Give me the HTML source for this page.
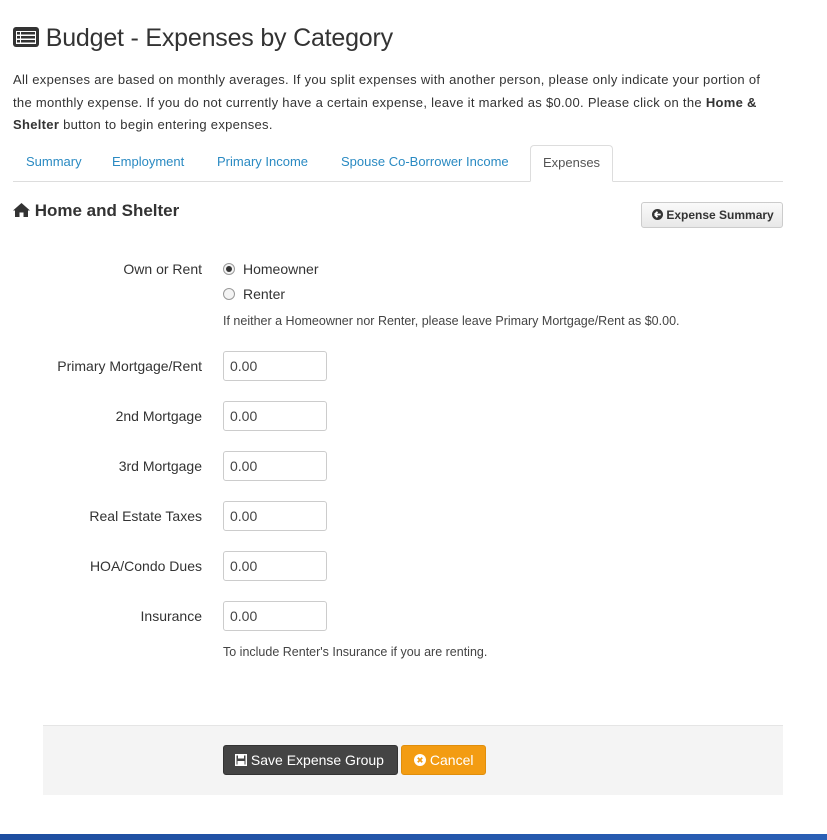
<!DOCTYPE html>
<html><head><style>
*{box-sizing:border-box}
body{margin:0;width:827px;height:840px;background:#fff;font-family:"Liberation Sans",sans-serif;color:#333;position:relative;overflow:hidden}
h1{position:absolute;left:13px;top:22px;margin:0;font-weight:normal;font-size:25px;color:#333;line-height:32px;letter-spacing:-0.2px}
.intro{position:absolute;left:13px;top:69px;width:800px;font-size:13px;line-height:22.5px;margin:0;letter-spacing:0.3px;white-space:nowrap}
.tabs{position:absolute;left:13px;top:145px;width:770px;height:37px;border-bottom:1px solid #ddd}
.tab{position:absolute;top:9px;font-size:13px;color:#2a8ac2}
.act{position:absolute;left:517px;top:0;width:83px;height:37px;border:1px solid #ddd;border-bottom:1px solid #fff;border-radius:4px 4px 0 0;background:#fff;color:#555;font-size:13px;text-align:center;padding-top:9px}
h3{position:absolute;left:13px;top:201px;margin:0;font-size:17px;font-weight:bold;color:#333}
.btn{position:absolute;border-radius:3px;font-size:12px}
.lbl{position:absolute;right:625px;font-size:14px;color:#333;text-align:right;white-space:nowrap}
.inp{position:absolute;left:223px;width:104px;height:30px;border:1px solid #ccc;border-radius:3px;font-size:14px;padding:6px 6px;color:#444}
.radio{position:absolute;left:223px;width:12px;height:12px;border:1px solid #999;border-radius:50%;background:#f4f4f4}
.t14{position:absolute;font-size:14px}
.help{position:absolute;left:223px;font-size:12.5px;color:#444}
</style></head><body>
<h1><svg width="26" height="20" viewBox="0 0 26 20" style="vertical-align:-1px"><rect x="0" y="0" width="26" height="20" rx="3" fill="#333"/><rect x="3" y="4" width="20" height="13" fill="#fff"/><g fill="#333"><rect x="4" y="5" width="3" height="2.5"/><rect x="8" y="5" width="14" height="2.5"/><rect x="4" y="9" width="3" height="2.5"/><rect x="8" y="9" width="14" height="2.5"/><rect x="4" y="13" width="3" height="2.5"/><rect x="8" y="13" width="14" height="2.5"/></g></svg> Budget - Expenses by Category</h1>
<p class="intro">All expenses are based on monthly averages. If you split expenses with another person, please only indicate your portion of<br>the monthly expense. If you do not currently have a certain expense, leave it marked as $0.00. Please click on the <b>Home &amp;</b><br><b>Shelter</b> button to begin entering expenses.</p>
<div class="tabs">
<span class="tab" style="left:13px">Summary</span>
<span class="tab" style="left:99px">Employment</span>
<span class="tab" style="left:204px">Primary Income</span>
<span class="tab" style="left:328px">Spouse Co-Borrower Income</span>
<div class="act">Expenses</div>
</div>
<h3><svg width="17" height="14" viewBox="0 0 17 14" style="vertical-align:-1px"><path d="M8.5 0 L0 7.5 L2 7.5 L2 14 L6.5 14 L6.5 9.5 L10.5 9.5 L10.5 14 L15 14 L15 7.5 L17 7.5 Z" fill="#333"/></svg> Home and Shelter</h3>
<div class="btn" style="left:641px;top:202px;width:142px;height:26px;border:1px solid #ccc;background:linear-gradient(#fafafa,#e8e8e8);color:#333;padding-top:5px;padding-left:10px;font-weight:bold"><svg width="11" height="11" viewBox="0 0 12 12" style="vertical-align:-1px"><circle cx="6" cy="6" r="6" fill="#333"/><path d="M3 6 L6 3 M3 6 L6 9 M3 6 H9.5" stroke="#fff" stroke-width="2"/></svg> Expense Summary</div>
<div class="lbl" style="top:261px">Own or Rent</div>
<div class="radio" style="top:263px"><div style="width:6px;height:6px;border-radius:50%;background:#333;margin:2px"></div></div>
<div class="t14" style="left:243px;top:261px">Homeowner</div>
<div class="radio" style="top:288px"></div>
<div class="t14" style="left:243px;top:286px">Renter</div>
<div class="help" style="top:314px">If neither a Homeowner nor Renter, please leave Primary Mortgage/Rent as $0.00.</div>
<div class="lbl" style="top:358px">Primary Mortgage/Rent</div><div class="inp" style="top:351px">0.00</div>
<div class="lbl" style="top:408px">2nd Mortgage</div><div class="inp" style="top:401px">0.00</div>
<div class="lbl" style="top:458px">3rd Mortgage</div><div class="inp" style="top:451px">0.00</div>
<div class="lbl" style="top:508px">Real Estate Taxes</div><div class="inp" style="top:501px">0.00</div>
<div class="lbl" style="top:558px">HOA/Condo Dues</div><div class="inp" style="top:551px">0.00</div>
<div class="lbl" style="top:608px">Insurance</div><div class="inp" style="top:601px">0.00</div>
<div class="help" style="top:645px">To include Renter's Insurance if you are renting.</div>
<div style="position:absolute;left:43px;top:725px;width:740px;height:70px;background:#f4f4f4;border-top:1px solid #e5e5e5"></div>
<div class="btn" style="left:223px;top:745px;width:175px;height:30px;background:#444;border:1px solid #333;color:#fff;font-size:14px;padding-top:6px;padding-left:11px"><svg width="12" height="12" viewBox="0 0 12 12" style="vertical-align:-1px"><rect x="0.75" y="0.75" width="10.5" height="10.5" fill="none" stroke="#fff" stroke-width="1.5"/><rect x="3" y="1" width="6" height="3.5" fill="#fff"/><rect x="2.5" y="7" width="7" height="3.5" fill="#fff"/></svg> Save Expense Group</div>
<div class="btn" style="left:401px;top:745px;width:85px;height:30px;background:#f39c12;border:1px solid #e08e0b;color:#fff;font-size:14px;padding-top:6px;padding-left:12px"><svg width="12" height="12" viewBox="0 0 12 12" style="vertical-align:-1px"><circle cx="6" cy="6" r="6" fill="#fff"/><path d="M3.8 3.8 L8.2 8.2 M8.2 3.8 L3.8 8.2" stroke="#f39c12" stroke-width="1.8"/></svg> Cancel</div>
<div style="position:absolute;left:0;top:834px;width:827px;height:6px;background:linear-gradient(90deg,#1e4ea0,#2a5fb5)"></div>
</body></html>
